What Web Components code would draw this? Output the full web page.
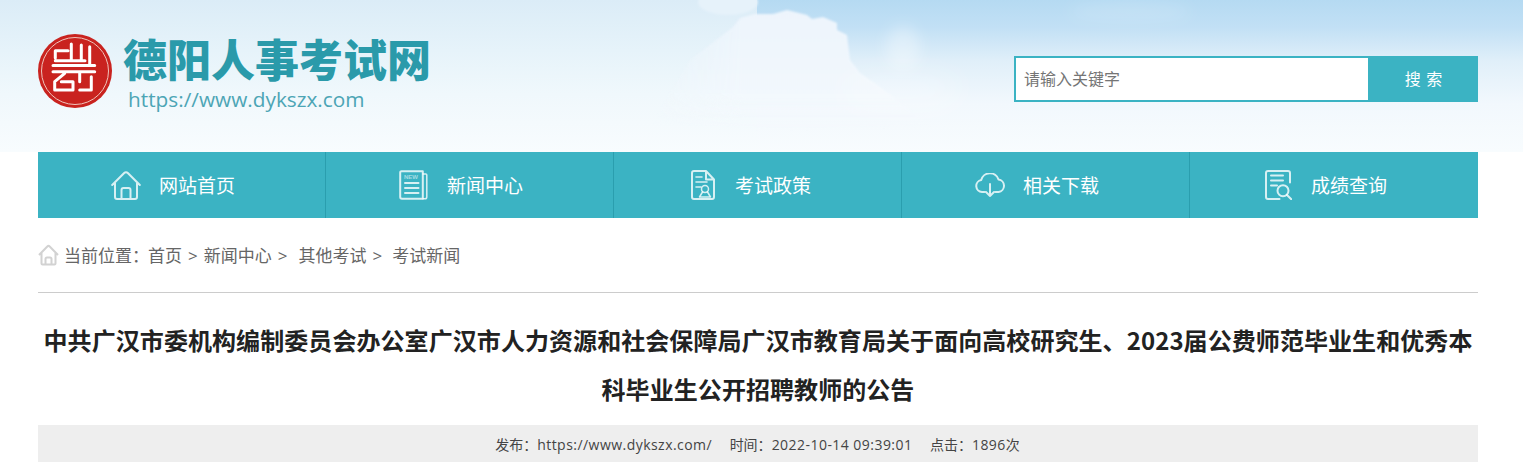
<!DOCTYPE html>
<html lang="zh-CN">
<head>
<meta charset="utf-8">
<title>德阳人事考试网</title>
<style>
html,body{margin:0;padding:0;background:#fff;overflow:hidden;height:474px}
body{font-family:"Noto Sans CJK SC","Liberation Sans",sans-serif}
</style>
</head>
<body>
<exam-page></exam-page>
<script>
function def(name, html){
  customElements.define(name, class extends HTMLElement{
    constructor(){super();this.attachShadow({mode:'open'}).innerHTML=html(this);}
  });
}
def('site-logo', ()=>`<style>
:host{display:flex;align-items:flex-start;gap:11px;padding-top:34px}
svg{display:block;flex:none}
.t{display:flex;flex-direction:column}
.n{font:900 44px/44px "Noto Sans CJK SC",sans-serif;color:#2a9aaa;margin-top:2px;white-space:nowrap}
.u{font:400 20.800px/24px "Open Sans",sans-serif;color:#4ca5b5;margin:7px 0 0 5px;white-space:nowrap}
</style>
<svg width="74" height="74" viewBox="0 0 74 74">
<circle cx="37" cy="37" r="37" fill="#c9231f"/>
<circle cx="37" cy="37" r="33.500" fill="none" stroke="#efc4bb" stroke-width="1"/>
<g fill="none" stroke="#fff" stroke-width="3" stroke-linecap="round" stroke-linejoin="round">
<path d="M17.300 24V16.700H30M33.300 10V26.700M17.300 26.700H47M43.300 11V26.700M51.700 12.700V31"/>
<path d="M15 31.500H56.700M15 37.700H56.700M26.700 39.300 16.700 47.700V56H35V47.700H23.300M41.700 39.300V47.700M53.300 42.700V56H41.700"/>
</g>
</svg>
<div class="t"><div class="n">德阳人事考试网</div><div class="u">https://www.dykszx.com</div></div>`);
def('search-box', ()=>`<style>
:host{display:flex;width:464px;height:46px;box-sizing:border-box;background:#3bb3c3;padding:2px 0 2px 2px;margin-top:56px}
.i{flex:none;width:352px;box-sizing:border-box;background:#fff;font:400 16px/40px "Noto Sans CJK SC",sans-serif;color:#757575;padding-left:8px}
.b{flex:1;color:#fff;font:400 16px/40px "Noto Sans CJK SC",sans-serif;text-align:center;letter-spacing:1px;padding-left:2px}
</style><div class="i">请输入关键字</div><div class="b">搜 索</div>`);
def('sky-backdrop', ()=>`<style>
:host{position:absolute;inset:0;display:block;overflow:hidden}
svg{display:block}
</style>
<svg width="1523" height="152" viewBox="0 0 1523 152">
<defs>
<linearGradient id="base" x1="0" y1="0" x2="0" y2="1"><stop offset="0" stop-color="#dbecf7"/><stop offset=".33" stop-color="#e6f3fa"/><stop offset=".62" stop-color="#f0f8fc"/><stop offset="1" stop-color="#f8fcfe"/></linearGradient>
<linearGradient id="blue" x1="0" y1="0" x2="0" y2="1"><stop offset="0" stop-color="#b5daf2"/><stop offset=".18" stop-color="#c2e0f5"/><stop offset=".4" stop-color="#e0eff9"/><stop offset=".68" stop-color="#f2f8fd"/><stop offset="1" stop-color="#f8fcfe"/></linearGradient>
<linearGradient id="cl" x1="0" y1="0" x2="0" y2="1"><stop offset="0" stop-color="#edf4fc"/><stop offset=".7" stop-color="#f2f8fd"/><stop offset="1" stop-color="#f6fafe" stop-opacity="0"/></linearGradient>
<linearGradient id="fade" gradientUnits="userSpaceOnUse" x1="650" y1="0" x2="745" y2="0"><stop offset="0" stop-color="#000"/><stop offset="1" stop-color="#fff"/></linearGradient>
<mask id="m" maskUnits="userSpaceOnUse" x="0" y="0" width="1523" height="152"><rect width="1523" height="152" fill="url(#fade)"/></mask>
<filter id="b1"><feGaussianBlur stdDeviation="1"/></filter>
<filter id="b6" x="-60%" y="-60%" width="220%" height="220%"><feGaussianBlur stdDeviation="7"/></filter>
<filter id="b12" x="-60%" y="-120%" width="220%" height="340%"><feGaussianBlur stdDeviation="14"/></filter>
</defs>
<rect width="1523" height="152" fill="url(#base)"/>
<rect x="757" width="766" height="152" fill="url(#blue)"/>
<ellipse cx="728" cy="2" rx="30" ry="13" fill="#e6f2fa" filter="url(#b1)"/>
<g mask="url(#m)"><path d="M650 125 690 60 733 27 740 18 755 14 773 14 787 10 807 15 812 19 823 17 837 23 837 30 847 35 850 60 860 73 880 87 930 125 800 130Z" fill="url(#cl)" filter="url(#b1)"/></g>
<ellipse cx="903" cy="48" rx="17" ry="22" fill="#fff" fill-opacity=".32" filter="url(#b6)"/>
<ellipse cx="900" cy="92" rx="60" ry="14" fill="#fff" fill-opacity=".3" filter="url(#b12)"/>
<ellipse cx="1130" cy="12" rx="60" ry="10" fill="#fff" fill-opacity=".12" filter="url(#b6)"/>
</svg>`);
def('site-header', ()=>`<style>
:host{display:flex;position:relative;justify-content:space-between;height:152px;box-sizing:border-box;padding:0 45px 0 38px}
site-logo,search-box{position:relative}
</style><sky-backdrop></sky-backdrop><site-logo></site-logo><search-box></search-box>`);
const icons={
home:[30,30,`<path d="M1.200 15 13.200 3a2.500 2.500 0 0 1 3.600 0L28.800 15M4 13V27a2 2 0 0 0 2 2H24a2 2 0 0 0 2-2V13M10.500 29V20a2 2 0 0 1 2-2h5a2 2 0 0 1 2 2V29"/>`],
news:[29,30,`<path d="M1.200 2.500a1.300 1.300 0 0 1 1.300-1.300H23.800V28.800H3a1.800 1.800 0 0 1-1.800-1.800Z"/><path d="M24 4h2.800a1 1 0 0 1 1 1V27a1.800 1.800 0 0 1-1.800 1.800H24" stroke-width="1.500"/><path d="M6 13H19.500M6 18H19.500M6 23H19.500" stroke-width="2"/><text x="5" y="8.800" font-family="Liberation Sans" font-size="6" font-weight="700" fill="#fff" fill-opacity=".55" stroke="none">NEW</text>`],
policy:[24,30,`<path d="M15 1H3a2 2 0 0 0-2 2V27a2 2 0 0 0 2 2H21a2 2 0 0 0 2-2V9.500ZM15 1V9.500H23"/><path d="M5 7H11M5 12H16M5 17H10" stroke-width="1.600"/><circle cx="14" cy="19" r="3.500" stroke-width="1.500"/><path d="M11.500 22 8.500 27H19.500L16.500 22" stroke-width="1.500"/>`],
cloud:[30,24,`<path d="M9.500 19H7a6 6 0 0 1-.8-11.900A9 9 0 0 1 23.500 6.500a6.300 6.300 0 0 1 0 12.500H20.500"/><path d="M15 11V23M11 19 15 23 19 19"/>`],
query:[27,30,`<path d="M14.500 29H3a2 2 0 0 1-2-2V3a2 2 0 0 1 2-2H23a2 2 0 0 1 2 2V12.500"/><path d="M6 5.500H18M6 10.500H18M6 15.500H12" stroke-width="2"/><circle cx="18" cy="20.700" r="5.500"/><path d="M22 25 26.300 29.300"/>`]};
def('nav-item', el=>{const [w,h,p]=icons[el.getAttribute('icon')];return `<style>
:host{display:flex;flex:none;width:288px;height:66px;box-sizing:border-box;align-items:center;justify-content:flex-start;gap:${el.getAttribute('gap')}px;padding-left:${el.getAttribute('pad')}px;color:#fff;font:400 19px/26px "Noto Sans CJK SC",sans-serif;border-right:1px solid #2a9eae}
:host(:last-child){border-right:0}
svg{display:block;flex:none;fill:none;stroke:#fff;stroke-opacity:.8;stroke-width:2;stroke-linejoin:round;stroke-linecap:round}
</style><svg width="${w}" height="${h}" viewBox="0 0 ${w} ${h}">${p}</svg><slot></slot>`});
def('main-nav', ()=>`<style>
:host{display:flex;width:1440px;height:66px;margin-left:38px;background:#3bb3c3}
</style>
<nav-item icon="home" pad="73" gap="18">网站首页</nav-item>
<nav-item icon="news" pad="73" gap="19">新闻中心</nav-item>
<nav-item icon="policy" pad="77" gap="20">考试政策</nav-item>
<nav-item icon="cloud" pad="73" gap="18">相关下载</nav-item>
<nav-item icon="query" pad="75" gap="19">成绩查询</nav-item>`);
def('bread-crumb', ()=>`<style>
:host{display:flex;align-items:center;height:75px;width:1440px;margin-left:38px;box-sizing:border-box;border-bottom:1px solid #ccc;padding-top:2px;color:#666;font:400 17px/24px "Open Sans","Noto Sans CJK SC",sans-serif;white-space:nowrap}
svg{display:block;flex:none;fill:none;stroke:#d2d2d2;stroke-width:2;stroke-linejoin:round;margin:-2px 5px 0 0}
span{flex:none}
</style><svg width="21" height="22" viewBox="0 0 21 22"><path d="M1 11 9.300 2.500a1.700 1.700 0 0 1 2.400 0L20 11M3.500 9V19.500a1 1 0 0 0 1 1H16.500a1 1 0 0 0 1-1V9M7.500 20.500V15a1.500 1.500 0 0 1 1.500-1.500h3a1.500 1.500 0 0 1 1.500 1.500V20.500"/></svg><span style="margin-right:-1px">当前位置：</span><span>首页</span><span style="margin-left:6px">&gt;</span><span style="margin-left:6px">新闻中心</span><span style="margin-left:6px">&gt;</span><span style="margin-left:11px">其他考试</span><span style="margin-left:6px">&gt;</span><span style="margin-left:10px">考试新闻</span>`);
def('article-head', ()=>`<style>
:host{display:block;width:1440px;margin-left:38px}
h1{margin:0;padding:22px 0 12px;font:700 24px/49px "Noto Sans CJK SC",sans-serif;color:#222;text-align:center;letter-spacing:.07px}
.m{display:flex;justify-content:center;gap:17.500px;height:37px;background:#eee;font:400 14px/39px "Open Sans","Noto Sans CJK SC",sans-serif;color:#444;white-space:nowrap;padding-right:1px}
.m span{letter-spacing:.46px}
</style><h1>中共广汉市委机构编制委员会办公室广汉市人力资源和社会保障局广汉市教育局关于面向高校研究生、2023届公费师范毕业生和优秀本科毕业生公开招聘教师的公告</h1>
<div class="m"><div>发布：<span>https://www.dykszx.com/</span></div><div>时间：<span>2022-10-14 09:39:01</span></div><div>点击：<span>1896</span>次</div></div>`);
def('exam-page', ()=>`<style>:host{display:block;width:1523px}</style>
<site-header></site-header><main-nav></main-nav><bread-crumb></bread-crumb><article-head></article-head>`);
</script>
</body>
</html>
